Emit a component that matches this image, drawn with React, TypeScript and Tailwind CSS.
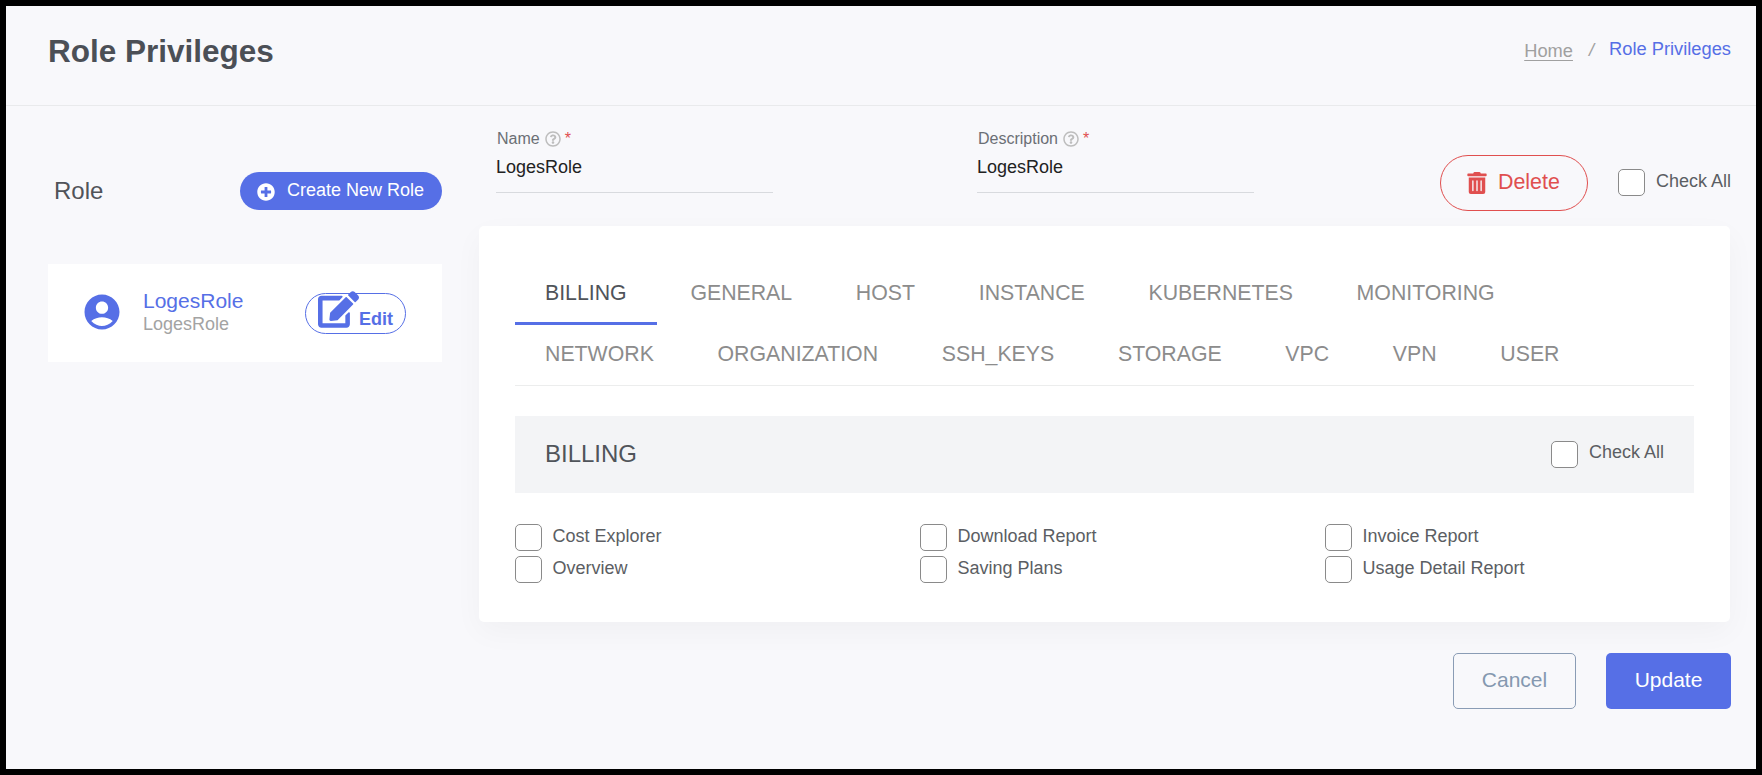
import { FaEdit, FaPlusCircle, FaRegQuestionCircle, FaTrashAlt } from "react-icons/fa";
import { MdAccountCircle } from "react-icons/md";

const row1 = ["BILLING", "GENERAL", "HOST", "INSTANCE", "KUBERNETES", "MONITORING"];
const row2 = ["NETWORK", "ORGANIZATION", "SSH_KEYS", "STORAGE", "VPC", "VPN", "USER"];
const items = ["Cost Explorer", "Download Report", "Invoice Report", "Overview", "Saving Plans", "Usage Detail Report"];

function Box() {
  return <span className="block w-[27px] h-[27px] shrink-0 rounded-[5px] border border-[#8a8a8a] bg-white" />;
}

function Tab({ label, active }: { label: string; active?: boolean }) {
  return (
    <div
      className={
        "h-[61px] px-[30px] flex items-center pt-[2px] text-[21.3px] leading-none border-b-[3px] " +
        (active ? "text-[#50545a] border-[#566fe6]" : "text-[#8c8c8c] border-transparent")
      }
    >
      {label}
    </div>
  );
}

function Field({ label, className }: { label: string; className?: string }) {
  return (
    <div className={"w-[277px] " + (className ?? "")}>
      <div className="pl-[1px] h-[18px] flex items-center text-[16px] leading-none text-[#6b6f75]">
        <span>{label}</span>
        <FaRegQuestionCircle className="ml-[5px] text-[#bdbdbd]" size={16} />
        <span className="ml-[4px] text-[#e04f4f]">*</span>
      </div>
      <div className="mt-[7px] h-[38px] border-b border-[#d8dade] text-[18px] leading-[24px] text-[#222]">LogesRole</div>
    </div>
  );
}

export default function App() {
  return (
    <div className="h-screen w-full border-[6px] border-black bg-[#f8f8fb] font-['Liberation_Sans',Arial,sans-serif] overflow-hidden">
      <header className="h-[100px] border-b border-[#e9eaec] pl-[42px] pr-[25px] flex items-center justify-between">
        <h1 className="text-[31.5px] font-bold leading-none text-[#4b4f56] -mt-[8px]">Role Privileges</h1>
        <nav className="flex items-center text-[18.3px] leading-none -mt-[12px]">
          <span className="text-[#a0a0a0] underline underline-offset-[3px] mt-[3px]">Home</span>
          <span className="ml-[16px] mt-[2px] text-[#a0a0a0] italic">/</span>
          <span className="ml-[15px] text-[#566fe6]">Role Privileges</span>
        </nav>
      </header>

      <div className="flex pl-[42px]">
        <aside className="w-[394px] shrink-0 pt-[66px]">
          <div className="flex items-center justify-between h-[38px]">
            <span className="pl-[6px] text-[24px] leading-none text-[#505359]">Role</span>
            <button className="h-[38px] w-[202px] rounded-full bg-[#566fe6] text-white text-[18px] leading-none flex items-center pl-[17px]">
              <FaPlusCircle size={18} className="mt-[1px]" />
              <span className="ml-[12px] -mt-[3px]">Create New Role</span>
            </button>
          </div>
          <div className="mt-[54px] h-[98px] bg-white flex items-center pl-[36px]">
            <MdAccountCircle size={42} className="text-[#566fe6] -ml-[3px] -mt-[2px]" />
            <div className="ml-[20px] w-[162px] -mt-[2px]">
              <div className="text-[21px] leading-[24px] text-[#566fe6]">LogesRole</div>
              <div className="text-[18px] leading-[22px] text-[#a3a3a3]">LogesRole</div>
            </div>
            <button className="w-[101px] h-[41px] rounded-full border border-[#566fe6] text-[#566fe6] flex items-end pl-[12px] pb-[2px]">
              <FaEdit size={41} className="shrink-0 mb-[1px]" />
              <span className="text-[18px] font-bold leading-[24px]">Edit</span>
            </button>
          </div>
        </aside>

        <main className="ml-[37px] w-[1252px]">
          <div className="h-[120px] flex items-start pt-[24px] pl-[17px]">
            <Field label="Name" />
            <Field label="Description" className="ml-[204px]" />
            <button className="ml-[186px] mt-[25px] w-[148px] h-[56px] rounded-full border border-[#e04f4f] text-[#e04f4f] flex items-center pl-[25px] text-[21.4px] leading-none">
              <FaTrashAlt size={22} />
              <span className="ml-[10px] -mt-[1px]">Delete</span>
            </button>
            <div className="ml-[30px] mt-[39px] flex items-center gap-[11px]">
              <Box />
              <span className="text-[18px] leading-none text-[#5b5e63] -mt-[3px] whitespace-nowrap">Check All</span>
            </div>
          </div>

          <section className="w-[1251px] h-[396px] bg-white rounded-[5px] shadow-[0_10px_30px_rgba(0,0,0,0.035)] px-[36px] pt-[38px]">
            <div className="border-b border-[#eceded]">
              <div className="flex gap-[3.7px]">
                {row1.map((t, i) => <Tab key={t} label={t} active={i === 0} />)}
              </div>
              <div className="flex gap-[3.7px] -mb-[1px]">
                {row2.map((t) => <Tab key={t} label={t} />)}
              </div>
            </div>

            <div className="mt-[30px] h-[77px] bg-[#f3f4f6] flex items-center justify-between pl-[30px] pr-[30px]">
              <span className="text-[24px] leading-none text-[#50545a] -mt-[2px]">BILLING</span>
              <div className="flex items-center gap-[11px]">
                <Box />
                <span className="text-[18px] leading-none text-[#5b5e63] -mt-[5px]">Check All</span>
              </div>
            </div>

            <div className="mt-[31px] grid grid-cols-[405px_405px_1fr] gap-y-[5px]">
              {items.map((t) => (
                <div key={t} className="flex items-center gap-[11px]">
                  <Box />
                  <span className="text-[18px] leading-none text-[#5b5e63] -mt-[4px] -ml-[0.5px]">{t}</span>
                </div>
              ))}
            </div>
          </section>

          <div className="mt-[31px] flex justify-end gap-[30px] pr-0">
            <button className="w-[123px] h-[56px] rounded-[5px] border border-[#8a9cb5] text-[#8598b0] text-[21px] leading-none pb-[3px]">Cancel</button>
            <button className="w-[125px] h-[56px] rounded-[5px] bg-[#566fe6] text-white text-[21px] leading-none pb-[3px]">Update</button>
          </div>
        </main>
      </div>
    </div>
  );
}
